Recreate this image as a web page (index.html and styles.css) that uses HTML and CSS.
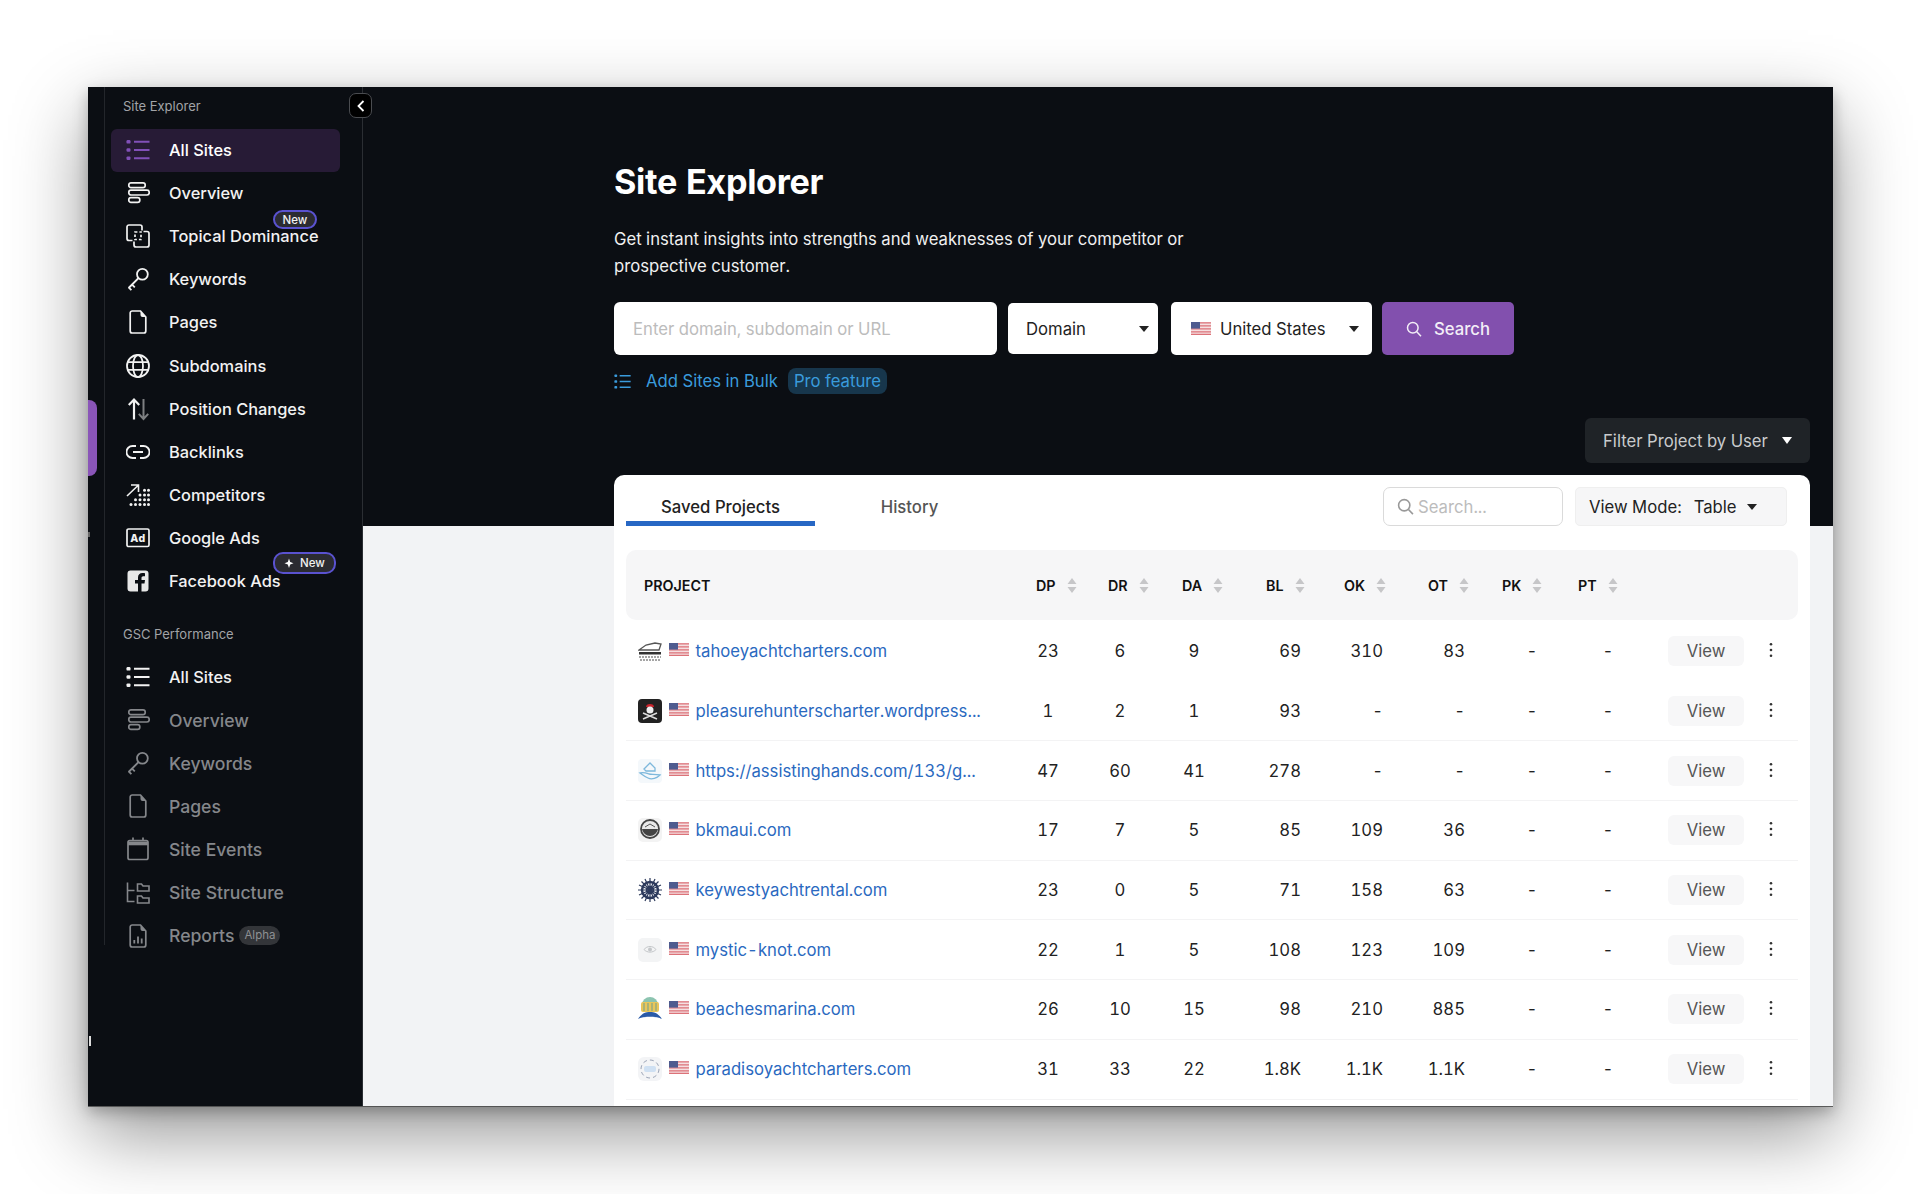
FILE: index.html
```html
<!DOCTYPE html>
<html lang="en">
<head>
    <meta charset="UTF-8">
    <meta name="viewport" content="width=device-width, initial-scale=1.0">
    <title>Site Explorer</title>
    <link rel="stylesheet" href="styles.css">
</head>
<body>
    <svg class="defs" width="0" height="0">
        <symbol id="i-list" viewBox="0 0 24 24">
            <g fill="currentColor"><rect x="0.5" y="2" width="4" height="3.6" rx="1.2"/><rect x="0.5" y="10.2" width="4" height="3.6" rx="1.2"/><rect x="0.5" y="18.4" width="4" height="3.6" rx="1.2"/></g>
            <path d="M8 3.8h15.5M8 12h15.5M8 20.2h15.5" fill="none" stroke="currentColor" stroke-width="2"/>
        </symbol>
        <symbol id="i-overview" viewBox="0 0 24 24">
            <g fill="none" stroke="currentColor" stroke-width="1.7"><rect x="2.8" y="1.8" width="16.4" height="4.8" rx="2.2"/><rect x="2.8" y="9.2" width="20.4" height="4.8" rx="2.2"/><rect x="2.8" y="16.6" width="11" height="4.8" rx="2.2"/></g>
        </symbol>
        <symbol id="i-topical" viewBox="0 0 24 24">
            <g fill="none" stroke="currentColor" stroke-width="1.7"><path d="M6.5 16.5H3a2 2 0 0 1-2-2V3a2 2 0 0 1 2-2h11a2 2 0 0 1 2 2v3.5"/><path d="M17.5 7.5H21a2 2 0 0 1 2 2V21a2 2 0 0 1-2 2H10a2 2 0 0 1-2-2v-3.5"/><path d="M9 8h6v7.5H9z" stroke-dasharray="2.4 2"/></g>
        </symbol>
        <symbol id="i-key" viewBox="0 0 24 24">
            <g fill="none" stroke="currentColor" stroke-width="1.8"><circle cx="16.4" cy="7.2" r="5.4"/><path d="M12.6 11 2.6 21M2.6 20.4l2.8 2.8M5.8 17.4l3 3"/></g>
        </symbol>
        <symbol id="i-page" viewBox="0 0 24 24">
            <path d="M4.2 3a2 2 0 0 1 2-2h8.3l5.3 6v14a2 2 0 0 1-2 2H6.2a2 2 0 0 1-2-2z" fill="none" stroke="currentColor" stroke-width="1.7"/>
            <path d="M14.5 1v4a2 2 0 0 0 2 2h3.3z" fill="currentColor"/>
        </symbol>
        <symbol id="i-globe" viewBox="0 0 24 24">
            <g fill="none" stroke="currentColor" stroke-width="1.8"><circle cx="12" cy="12" r="11"/><ellipse cx="12" cy="12" rx="5" ry="11"/><path d="M1.6 8.2h20.8M1.6 15.8h20.8"/></g>
        </symbol>
        <symbol id="i-position" viewBox="0 0 24 24">
            <path d="M8 22.5V2.5M2.8 8 8 2.5 13.2 8" fill="none" stroke="currentColor" stroke-width="2.2"/>
            <path d="M17.5 2v20M12.8 16.8l4.7 5.2 4.7-5.2" fill="none" stroke="currentColor" stroke-width="2" opacity=".5"/>
        </symbol>
        <symbol id="i-link" viewBox="0 0 24 24">
            <path d="M10 6H6.5a6 6 0 0 0 0 12H10M14 6h3.5a6 6 0 0 1 0 12H14M7 12h10" fill="none" stroke="currentColor" stroke-width="1.8"/>
        </symbol>
        <symbol id="i-competitors" viewBox="0 0 24 24">
            <path d="M1 13 12 2.500M5 2h7.500v7" fill="none" stroke="currentColor" stroke-width="1.6"/>
            <g fill="currentColor"><circle cx="5" cy="21.5" r="1.5"/><circle cx="9.5" cy="21.5" r="1.5"/><circle cx="14" cy="21.5" r="1.5"/><circle cx="18.5" cy="21.5" r="1.5"/><circle cx="22.5" cy="21.5" r="1.5"/><circle cx="9.5" cy="16.8" r="1.5"/><circle cx="14" cy="16.8" r="1.5"/><circle cx="18.5" cy="16.8" r="1.5"/><circle cx="22.5" cy="16.8" r="1.5"/><circle cx="14" cy="12" r="1.5"/><circle cx="18.5" cy="12" r="1.5"/><circle cx="22.5" cy="12" r="1.5"/><circle cx="18.5" cy="7.2" r="1.5"/><circle cx="22.5" cy="7.2" r="1.5"/></g>
        </symbol>
        <symbol id="i-facebook" viewBox="0 0 24 24">
            <path fill="currentColor" d="M4.500 1.500h15a3 3 0 0 1 3 3v15a3 3 0 0 1-3 3h-4v-8h3l.5-3.500h-3.500V9c0-1 .5-1.700 1.800-1.700H19V4.300c-.5 0-1.500-.2-2.600-.2-2.600 0-4.400 1.600-4.400 4.500V11H9v3.500h3v8H4.500a3 3 0 0 1-3-3v-15a3 3 0 0 1 3-3z"/>
        </symbol>
        <symbol id="i-calendar" viewBox="0 0 24 24">
            <rect x="2" y="3.5" width="20" height="19" rx="1.8" fill="none" stroke="currentColor" stroke-width="1.7"/>
            <path d="M2 4.500h20v3.800H2z" fill="currentColor"/>
            <path d="M7 .5v3.500M17 .5v3.500" stroke="currentColor" stroke-width="1.7"/>
        </symbol>
        <symbol id="i-structure" viewBox="0 0 24 24">
            <path d="M1.500 1.500V20.500H8.500M1.500 9.500H8.500M11.500 3h4l1.500 2h6v5H11.500zM11.500 15h4l1.500 2h6v5H11.500z" fill="none" stroke="currentColor" stroke-width="1.6"/>
        </symbol>
        <symbol id="i-report" viewBox="0 0 24 24">
            <path d="M4.200 3a2 2 0 0 1 2-2h8.300l5.300 6v14a2 2 0 0 1-2 2H6.200a2 2 0 0 1-2-2z" fill="none" stroke="currentColor" stroke-width="1.7"/>
            <path d="M14.500 1v4a2 2 0 0 0 2 2h3.300z" fill="currentColor"/>
            <path d="M8.300 19.500v-3.500M12 19.500v-7M15.700 19.500v-5" stroke="currentColor" stroke-width="1.8"/>
        </symbol>
        <symbol id="i-search" viewBox="0 0 16 16">
            <circle cx="6.8" cy="6.8" r="5.3" fill="none" stroke="currentColor" stroke-width="1.5"/>
            <path d="m10.800 10.800 4.200 4.400" stroke="currentColor" stroke-width="1.5"/>
        </symbol>
        <symbol id="i-flag" viewBox="0 0 20 13">
            <rect width="20" height="13" fill="#f5dfe0"/>
            <path d="M0 .9h20M0 3.900h20M0 6.900h20M0 9.900h20M0 12.400h20" stroke="#dc7278" stroke-width="1.4"/>
            <rect width="9" height="6.6" fill="#4e5b8f"/>
        </symbol>
        <symbol id="i-sort" viewBox="0 0 10 15">
            <path d="M5 0 9.500 6H.5zM5 15 .5 9h9z" fill="#c6c6c8"/>
        </symbol>
        <symbol id="i-kebab" viewBox="0 0 16 16">
            <g fill="#333"><circle cx="8" cy="2.2" r="1.3"/><circle cx="8" cy="8" r="1.3"/><circle cx="8" cy="13.8" r="1.3"/></g>
        </symbol>
    </svg>

    <div class="window">
        <div class="rail">
            <span class="rail-tab"></span>
            <span class="rail-speck"></span>
            <span class="rail-tick"></span>
        </div>

        <aside class="sidebar">
            <button class="collapse" aria-label="Collapse">
                <svg width="10" height="12" viewBox="0 0 10 12"><path d="M7.500 1 2.500 6l5 5" fill="none" stroke="#fff" stroke-width="1.800"/></svg>
            </button>

            <div class="nav-label">Site Explorer</div>
            <nav class="nav">
                <a class="nav-item active"><svg class="nav-icon"><use href="#i-list"/></svg>All Sites</a>
                <a class="nav-item"><svg class="nav-icon"><use href="#i-overview"/></svg>Overview</a>
                <a class="nav-item"><svg class="nav-icon"><use href="#i-topical"/></svg>Topical Dominance<span class="badge badge-topical">New</span></a>
                <a class="nav-item"><svg class="nav-icon"><use href="#i-key"/></svg>Keywords</a>
                <a class="nav-item"><svg class="nav-icon"><use href="#i-page"/></svg>Pages</a>
                <a class="nav-item"><svg class="nav-icon"><use href="#i-globe"/></svg>Subdomains</a>
                <a class="nav-item"><svg class="nav-icon"><use href="#i-position"/></svg>Position Changes</a>
                <a class="nav-item"><svg class="nav-icon"><use href="#i-link"/></svg>Backlinks</a>
                <a class="nav-item"><svg class="nav-icon"><use href="#i-competitors"/></svg>Competitors</a>
                <a class="nav-item"><svg class="nav-icon" viewBox="0 0 24 24"><rect x="1" y="3" width="22" height="17.5" rx="1.6" fill="none" stroke="currentColor" stroke-width="1.7"/><text x="12" y="16" text-anchor="middle" font-family="Inter, sans-serif" font-size="10.5" font-weight="800" letter-spacing=".6" fill="currentColor">Ad</text></svg>Google Ads</a>
                <a class="nav-item"><svg class="nav-icon icon-fb"><use href="#i-facebook"/></svg>Facebook Ads<span class="badge badge-fb"><svg width="12" height="12" viewBox="0 0 12 12"><path d="M5 1.500 6.200 5 9.500 6.200 6.200 7.400 5 11 3.800 7.400.5 6.200 3.800 5z" fill="#fff"/></svg>New</span></a>
            </nav>

            <div class="nav-label nav-label-gsc">GSC Performance</div>
            <nav class="nav">
                <a class="nav-item"><svg class="nav-icon"><use href="#i-list"/></svg>All Sites</a>
                <a class="nav-item muted"><svg class="nav-icon"><use href="#i-overview"/></svg>Overview</a>
                <a class="nav-item muted"><svg class="nav-icon"><use href="#i-key"/></svg>Keywords</a>
                <a class="nav-item muted"><svg class="nav-icon"><use href="#i-page"/></svg>Pages</a>
                <a class="nav-item muted"><svg class="nav-icon"><use href="#i-calendar"/></svg>Site Events</a>
                <a class="nav-item muted"><svg class="nav-icon"><use href="#i-structure"/></svg>Site Structure</a>
                <a class="nav-item muted"><svg class="nav-icon"><use href="#i-report"/></svg>Reports<span class="alpha">Alpha</span></a>
            </nav>
        </aside>

        <main class="main">
            <h1 class="title">Site Explorer</h1>
            <p class="intro">Get instant insights into strengths and weaknesses of your competitor or prospective customer.</p>

            <div class="search-row">
                <input class="search-input" type="text" placeholder="Enter domain, subdomain or URL">
                <button class="select select-domain">Domain<span class="caret"></span></button>
                <button class="select select-country"><span class="country"><svg width="20" height="13"><use href="#i-flag"/></svg>United States</span><span class="caret"></span></button>
                <button class="search-btn"><svg width="16" height="16"><use href="#i-search"/></svg>Search</button>
            </div>

            <div class="bulk">
                <svg class="bulk-icon" width="17" height="17"><use href="#i-list"/></svg>
                <a class="bulk-link">Add Sites in Bulk</a>
                <span class="pro">Pro feature</span>
            </div>

            <div class="filter-row">
                <button class="filter">Filter Project by User<span class="caret caret-light"></span></button>
            </div>

            <section class="card">
                <div class="card-top">
                    <a class="tab tab-active">Saved Projects</a>
                    <a class="tab">History</a>
                    <div class="tools">
                        <div class="mini-search"><svg width="17" height="17"><use href="#i-search"/></svg>Search...</div>
                        <button class="view-mode"><span>View Mode:</span><span class="view-value">Table</span><span class="caret"></span></button>
                    </div>
                </div>

                <div class="row head">
                    <div class="th-project">PROJECT</div>
                    <div class="th">DP<svg class="sort"><use href="#i-sort"/></svg></div>
                    <div class="th">DR<svg class="sort"><use href="#i-sort"/></svg></div>
                    <div class="th">DA<svg class="sort"><use href="#i-sort"/></svg></div>
                    <div class="th">BL<svg class="sort"><use href="#i-sort"/></svg></div>
                    <div class="th th-ok">OK<svg class="sort"><use href="#i-sort"/></svg></div>
                    <div class="th th-ot">OT<svg class="sort"><use href="#i-sort"/></svg></div>
                    <div class="th th-p">PK<svg class="sort"><use href="#i-sort"/></svg></div>
                    <div class="th th-p">PT<svg class="sort"><use href="#i-sort"/></svg></div>
                    <div></div>
                </div>

                <div class="rows">
                    <div class="row">
                        <div class="project">
                            <svg class="favicon" viewBox="0 0 24 24"><path d="M1 11 8 6l9-2 6 1-2 6z" fill="#fff" stroke="#555" stroke-width="1.3"/><path d="M1 13h22v2.500H1z" fill="#333"/><path d="M1 18h22M2 21h20" stroke="#888" stroke-width="1.6" stroke-dasharray="2 1"/></svg>
                            <svg class="flag"><use href="#i-flag"/></svg>
                            <a>tahoeyachtcharters.com</a>
                        </div>
                        <div class="mid">23</div><div class="mid">6</div><div class="mid">9</div>
                        <div class="end">69</div><div class="end">310</div><div class="end">83</div>
                        <div class="dash">-</div><div class="dash">-</div>
                        <div class="actions"><button class="view">View</button><svg class="kebab"><use href="#i-kebab"/></svg></div>
                    </div>
                    <div class="row">
                        <div class="project">
                            <svg class="favicon" viewBox="0 0 24 24"><rect width="24" height="24" rx="4" fill="#222"/><path d="M8 8a4 3 0 0 1 8 0z" fill="#c8242c"/><circle cx="12" cy="11" r="3.5" fill="#eee"/><path d="m5 14 14 6M19 14 5 20" stroke="#ddd" stroke-width="1.5"/></svg>
                            <svg class="flag"><use href="#i-flag"/></svg>
                            <a>pleasurehunterscharter.wordpress...</a>
                        </div>
                        <div class="mid">1</div><div class="mid">2</div><div class="mid">1</div>
                        <div class="end">93</div><div class="end">-</div><div class="end">-</div>
                        <div class="dash">-</div><div class="dash">-</div>
                        <div class="actions"><button class="view">View</button><svg class="kebab"><use href="#i-kebab"/></svg></div>
                    </div>
                    <div class="row">
                        <div class="project">
                            <svg class="favicon" viewBox="0 0 24 24"><rect width="24" height="24" rx="4" fill="#f4f8fb"/><path d="M2 14c4-1 6 0 9 1 3 .5 6 0 11 1-3 3-8 5-12 3-3-1-5-3-8-5zM6 10l6-6 5 5v3H8z" fill="none" stroke="#7db8dc" stroke-width="1.3"/></svg>
                            <svg class="flag"><use href="#i-flag"/></svg>
                            <a>https://assistinghands.com/133/g...</a>
                        </div>
                        <div class="mid">47</div><div class="mid">60</div><div class="mid">41</div>
                        <div class="end">278</div><div class="end">-</div><div class="end">-</div>
                        <div class="dash">-</div><div class="dash">-</div>
                        <div class="actions"><button class="view">View</button><svg class="kebab"><use href="#i-kebab"/></svg></div>
                    </div>
                    <div class="row">
                        <div class="project">
                            <svg class="favicon" viewBox="0 0 24 24"><rect width="24" height="24" rx="5" fill="#f3f3f3"/><circle cx="12" cy="11" r="9" fill="#e8e8e8" stroke="#444" stroke-width="1.8"/><path d="M4 11h16c-1 4-4 7-8 7s-7-3-8-7z" fill="#444"/><path d="M7 9l5-3 5 3" stroke="#555" fill="none"/></svg>
                            <svg class="flag"><use href="#i-flag"/></svg>
                            <a>bkmaui.com</a>
                        </div>
                        <div class="mid">17</div><div class="mid">7</div><div class="mid">5</div>
                        <div class="end">85</div><div class="end">109</div><div class="end">36</div>
                        <div class="dash">-</div><div class="dash">-</div>
                        <div class="actions"><button class="view">View</button><svg class="kebab"><use href="#i-kebab"/></svg></div>
                    </div>
                    <div class="row">
                        <div class="project">
                            <svg class="favicon" viewBox="0 0 24 24"><g stroke="#2d3a5c" fill="none"><circle cx="12" cy="12" r="8" stroke-width="2.5"/><circle cx="12" cy="12" r="3.5" stroke-width="1.5"/><path d="M12 0v24M0 12h24M3.500 3.500l17 17M20.500 3.500l-17 17M7 1l10 22M17 1 7 23M1 7l22 10M23 7 1 17" stroke-width="1.2"/></g></svg>
                            <svg class="flag"><use href="#i-flag"/></svg>
                            <a>keywestyachtrental.com</a>
                        </div>
                        <div class="mid">23</div><div class="mid">0</div><div class="mid">5</div>
                        <div class="end">71</div><div class="end">158</div><div class="end">63</div>
                        <div class="dash">-</div><div class="dash">-</div>
                        <div class="actions"><button class="view">View</button><svg class="kebab"><use href="#i-kebab"/></svg></div>
                    </div>
                    <div class="row">
                        <div class="project">
                            <svg class="favicon" viewBox="0 0 24 24"><rect width="24" height="24" rx="5" fill="#f3f4f5"/><path d="M6 11.500c3-4 9-4 12 0-3 3.500-9 3.500-12 0z" fill="none" stroke="#c3c6c9"/><circle cx="12" cy="11.5" r="2" fill="#c3c6c9"/></svg>
                            <svg class="flag"><use href="#i-flag"/></svg>
                            <a>mystic-knot.com</a>
                        </div>
                        <div class="mid">22</div><div class="mid">1</div><div class="mid">5</div>
                        <div class="end">108</div><div class="end">123</div><div class="end">109</div>
                        <div class="dash">-</div><div class="dash">-</div>
                        <div class="actions"><button class="view">View</button><svg class="kebab"><use href="#i-kebab"/></svg></div>
                    </div>
                    <div class="row">
                        <div class="project">
                            <svg class="favicon" viewBox="0 0 24 24"><circle cx="12" cy="8" r="8" fill="#8cc4b0"/><rect x="3" y="5" width="18" height="10" rx="2" fill="#e9c65a"/><path d="M6 6v8M10 6v8M14 6v8M18 6v8" stroke="#6f9f90"/><path d="M0 22c4-6 8-7 12-7s8 1 12 7c-5-3-19-3-24 0z" fill="#2a5aa8"/></svg>
                            <svg class="flag"><use href="#i-flag"/></svg>
                            <a>beachesmarina.com</a>
                        </div>
                        <div class="mid">26</div><div class="mid">10</div><div class="mid">15</div>
                        <div class="end">98</div><div class="end">210</div><div class="end">885</div>
                        <div class="dash">-</div><div class="dash">-</div>
                        <div class="actions"><button class="view">View</button><svg class="kebab"><use href="#i-kebab"/></svg></div>
                    </div>
                    <div class="row">
                        <div class="project">
                            <svg class="favicon" viewBox="0 0 24 24"><rect width="24" height="24" rx="6" fill="#f3f4f6"/><circle cx="12" cy="12" r="9" fill="none" stroke="#9aa3b5" stroke-width="1" stroke-dasharray="4 3"/><rect x="6" y="9" width="12" height="6" rx="2" fill="#cfe0f2"/></svg>
                            <svg class="flag"><use href="#i-flag"/></svg>
                            <a>paradisoyachtcharters.com</a>
                        </div>
                        <div class="mid">31</div><div class="mid">33</div><div class="mid">22</div>
                        <div class="end">1.8K</div><div class="end">1.1K</div><div class="end">1.1K</div>
                        <div class="dash">-</div><div class="dash">-</div>
                        <div class="actions"><button class="view">View</button><svg class="kebab"><use href="#i-kebab"/></svg></div>
                    </div>
                </div>
            </section>
        </main>
    </div>
</body>
</html>
```

FILE: styles.css
```css
* {
    box-sizing: border-box;
}
body {
    margin: 0;
    height: 1194px;
    overflow: hidden;
    background: #fff;
    font-family: Inter, "Noto Sans", sans-serif;
    font-size: 16.7px;
    font-variant-numeric: tabular-nums;
    color: #222;
}
button {
    font: inherit;
    border: none;
    cursor: pointer;
}
.defs {
    position: absolute;
}
.window {
    display: flex;
    width: 1744.5px;
    height: 1019px;
    margin: 87px 0 0 88px;
    overflow: hidden;
    background: #0b0e13;
    box-shadow: 0 1px 0 rgba(70, 70, 70, 0.8), 0 28px 70px rgba(0, 0, 0, 0.42), 0 6px 14px rgba(0, 0, 0, 0.25);
}

/* left rail */
.rail {
    position: relative;
    flex: none;
    width: 17px;
    height: 858px;
    border-right: 1px solid #23262b;
}
.rail-tab {
    position: absolute;
    left: 0;
    top: 313px;
    width: 9px;
    height: 76px;
    background: #8a55b8;
    border-radius: 0 8px 8px 0;
}
.rail-speck {
    position: absolute;
    left: 0;
    top: 445px;
    width: 2px;
    height: 5px;
    background: #666;
}
.rail-tick {
    position: absolute;
    left: 1px;
    top: 949px;
    width: 2px;
    height: 10px;
    background: #ddd;
}

/* sidebar */
.sidebar {
    position: relative;
    flex: none;
    width: 258px;
    padding: 9px 0 0 6px;
    border-right: 1px solid #2b2e33;
}
.collapse {
    position: absolute;
    z-index: 2;
    top: 6px;
    right: -10px;
    display: flex;
    align-items: center;
    justify-content: center;
    width: 23px;
    height: 25px;
    padding: 0;
    background: #000;
    border: 1px solid #4a4c50;
    border-radius: 7px;
}
.nav-label {
    height: 18px;
    margin: 1px 0 14px;
    padding-left: 12px;
    font-size: 13px;
    line-height: 18px;
    color: #a2a4a7;
}
.nav-label-gsc {
    margin: 22px 0 13px;
}
.nav {
    width: 229px;
}
.nav-item {
    position: relative;
    display: flex;
    align-items: center;
    gap: 19px;
    height: 43.1px;
    padding-left: 15px;
    padding-bottom: 1px;
    font-size: 16.4px;
    font-weight: 500;
    color: #f2f2f2;
    white-space: nowrap;
}
.nav-icon {
    flex: none;
    width: 24px;
    height: 24px;
}
.icon-fb {
    color: #e8e8e8;
}
.nav-item.active {
    background: #271b36;
    border-radius: 6px;
    color: #fff;
}
.nav-item.active .nav-icon {
    color: #8150b8;
}
.nav-item.muted {
    font-size: 17.6px;
    color: #85878b;
}
.badge {
    position: absolute;
    left: 162px;
    display: flex;
    align-items: center;
    justify-content: center;
    gap: 4px;
    background: #2b2b31;
    border: 2px solid #5a52cf;
    border-radius: 10px;
    font-size: 11.5px;
    font-weight: 500;
    color: #f2f2f2;
}
.badge-topical {
    top: -5px;
    width: 44px;
    height: 19px;
}
.badge-fb {
    top: -8px;
    width: 63px;
    height: 22px;
}
.alpha {
    margin-left: -14px;
    padding: 0 5px;
    height: 19px;
    line-height: 19px;
    background: #333539;
    border-radius: 10px;
    font-size: 11.5px;
    font-weight: 400;
    color: #8e9094;
}

/* main area */
.main {
    flex: 1;
    min-width: 0;
    padding: 73px 22.5px 0 251px;
    background: linear-gradient(#0b0e13 439px, #f2f3f5 439px);
    color: #fff;
}
.title {
    margin: 0;
    font-size: 34.2px;
    font-weight: 700;
    line-height: 44px;
    letter-spacing: -0.3px;
}
.intro {
    max-width: 600px;
    margin: 22px 0 23px;
    line-height: 26.5px;
    color: #f0f0f0;
}
.search-row {
    display: flex;
    align-items: center;
    height: 53px;
}
.search-input {
    width: 383px;
    height: 53px;
    padding: 0 19px;
    background: #fff;
    border: none;
    border-radius: 6px;
    font: inherit;
}
.search-input::placeholder {
    color: #bcbcbc;
}
.select {
    display: flex;
    align-items: center;
    justify-content: space-between;
    background: #fff;
    border-radius: 5px;
    color: #222;
}
.select-domain {
    width: 150px;
    height: 51px;
    margin-left: 11px;
    padding: 0 9px 0 18px;
}
.select-country {
    width: 201px;
    height: 53px;
    margin-left: 13px;
    padding: 0 13px 0 20px;
}
.country {
    display: flex;
    align-items: center;
    gap: 9px;
}
.caret {
    flex: none;
    width: 0;
    height: 0;
    border-left: 5px solid transparent;
    border-right: 5px solid transparent;
    border-top: 6px solid #222;
}
.caret-light {
    border-left-width: 5.5px;
    border-right-width: 5.5px;
    border-top: 7px solid #fff;
}
.search-btn {
    display: flex;
    align-items: center;
    justify-content: center;
    gap: 12px;
    width: 132px;
    height: 53px;
    margin-left: 10px;
    background: #8250ae;
    border-radius: 5px;
    font-weight: 500;
    color: #f3eef7;
}
.bulk {
    display: flex;
    align-items: center;
    height: 26px;
    margin-top: 13px;
    color: #3a9bdc;
}
.bulk-link {
    margin-left: 15px;
}
.pro {
    margin-left: 10px;
    padding: 0 6px;
    height: 26px;
    line-height: 26px;
    background: #17364c;
    border-radius: 8px;
}
.filter-row {
    display: flex;
    justify-content: flex-end;
    margin-top: 24px;
}
.filter {
    display: flex;
    align-items: center;
    justify-content: space-between;
    width: 225px;
    height: 45px;
    padding: 0 18px;
    background: #1f2327;
    border-radius: 6px;
    color: #c9cbcd;
}

/* projects card */
.card {
    margin-top: 12px;
    padding: 12px 12px 20px;
    background: #fff;
    border-radius: 10px 10px 0 0;
    color: #222;
}
.card-top {
    display: flex;
    height: 39px;
}
.tab {
    position: relative;
    width: 189px;
    padding-top: 10px;
    text-align: center;
    font-weight: 500;
    line-height: 20px;
    color: #555;
}
.tab-active {
    color: #222;
    border-bottom: 5px solid #2767c4;
    border-radius: 5px 5px 0 0;
}
.tools {
    display: flex;
    gap: 12px;
    margin: 0 11px 0 auto;
}
.mini-search {
    display: flex;
    align-items: center;
    gap: 4px;
    width: 180px;
    padding-left: 13px;
    border: 1.5px solid #dadada;
    border-radius: 7px;
    color: #bcbcbc;
}
.mini-search svg {
    color: #999;
}
.view-mode {
    display: flex;
    align-items: center;
    width: 212px;
    padding: 0 0 0 13px;
    background: #f6f6f7;
    border: 1px solid #efefef;
    border-radius: 5px;
    color: #222;
}
.view-value {
    margin: 0 10px 0 12px;
}

/* table */
.row {
    display: grid;
    grid-template-columns: 390px 72px 74px 84px 74px 82px 82px 76px 76px 162px;
    align-items: center;
    height: 59.7px;
    border-bottom: 1px solid #f3f3f4;
}
.rows .row:first-child {
    border-bottom-color: transparent;
}
.head {
    height: 70px;
    margin: 24px 0 2px;
    background: #f6f6f7;
    border-bottom: none;
    border-radius: 10px;
    font-size: 14.3px;
    font-weight: 600;
    color: #111;
}
.th-project {
    padding-left: 18px;
}
.th {
    display: flex;
    align-items: center;
    gap: 11px;
    padding-left: 20px;
}
.th-ok {
    padding-left: 24px;
}
.th-ot {
    padding-left: 26px;
}
.th-p {
    padding-left: 18px;
}
.sort {
    width: 10px;
    height: 15px;
}
.project {
    display: flex;
    align-items: center;
    padding-left: 12px;
    white-space: nowrap;
}
.project a {
    margin-left: 6.5px;
    color: #2a69c0;
}
.favicon {
    flex: none;
    width: 24px;
    height: 24px;
}
.flag {
    flex: none;
    width: 20px;
    height: 13px;
    margin: -3px 0 0 7px;
}
.mid {
    width: 24px;
    margin-left: 20px;
    text-align: center;
}
.end {
    padding-right: 19px;
    text-align: right;
}
.dash {
    padding-left: 20px;
    text-align: center;
}
.actions {
    display: flex;
    align-items: center;
    padding-left: 32px;
}
.view {
    width: 76px;
    height: 30px;
    padding: 0;
    background: #f7f7f8;
    border-radius: 6px;
    color: #555;
}
.kebab {
    width: 16px;
    height: 16px;
    margin: -2px 0 0 19px;
}
```
